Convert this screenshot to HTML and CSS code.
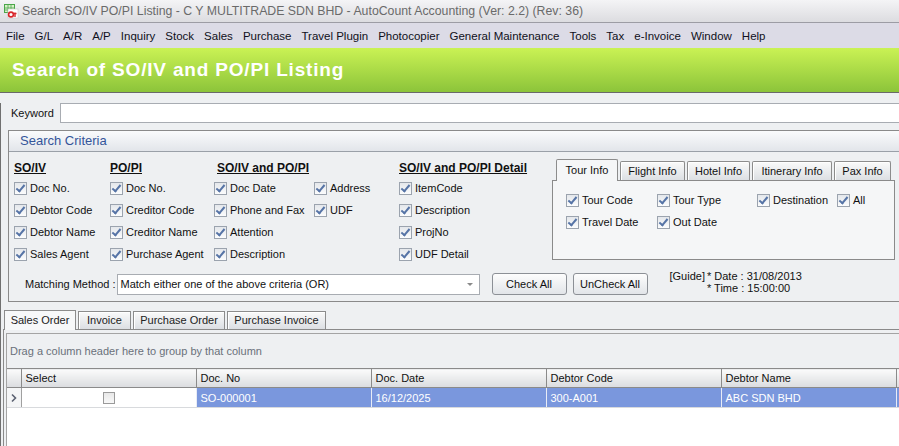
FILE: index.html
```html
<!DOCTYPE html>
<html lang="en">
<head>
    <meta charset="UTF-8">
    <meta name="viewport" content="width=device-width, initial-scale=1.0">
    <title>Search SO/IV PO/PI Listing</title>
    <link rel="stylesheet" href="styles.css">
</head>
<body>
    <header class="titlebar">
        <svg class="app-icon" width="16" height="16" viewBox="0 0 16 16">
            <rect x="1" y="1" width="11" height="9" fill="#4aa64a"/>
            <rect x="2" y="2" width="9" height="7" fill="#d8f0c8"/>
            <path d="M2 5h9M2 7h9M5 2v7M8 2v7" stroke="#4aa64a" stroke-width="0.8"/>
            <rect x="5" y="6" width="10" height="9" fill="#fff" stroke="#c8c8c8" stroke-width="0.6"/>
            <circle cx="8" cy="11.5" r="2.4" fill="none" stroke="#d8262a" stroke-width="1.6"/>
            <path d="M12 9.5v4.5M11 10.5h2.5" stroke="#d8262a" stroke-width="1.4"/>
        </svg>
        <span>Search SO/IV PO/PI Listing - C Y MULTITRADE SDN BHD - AutoCount Accounting (Ver: 2.2) (Rev: 36)</span>
    </header>

    <nav class="menubar">
        <span>File</span><span>G/L</span><span>A/R</span><span>A/P</span><span>Inquiry</span><span>Stock</span>
        <span>Sales</span><span>Purchase</span><span>Travel Plugin</span><span>Photocopier</span>
        <span>General Maintenance</span><span>Tools</span><span>Tax</span><span>e-Invoice</span>
        <span>Window</span><span>Help</span>
    </nav>

    <div class="banner">
        <h1>Search of SO/IV and PO/PI Listing</h1>
    </div>

    <main class="form">
        <div class="keyword-row">
            <label for="keyword">Keyword</label>
            <input type="text" id="keyword">
        </div>

        <section class="criteria">
            <div class="criteria-head">Search Criteria</div>
            <div class="criteria-grid">
                <div class="col-head">SO/IV</div>
                <div class="col-head">PO/PI</div>
                <div class="col-head wide shift">SO/IV and PO/PI</div>
                <div class="col-head">SO/IV and PO/PI Detail</div>

                <div class="check"><span class="cb on"></span>Doc No.</div>
                <div class="check"><span class="cb on"></span>Doc No.</div>
                <div class="check"><span class="cb on"></span>Doc Date</div>
                <div class="check"><span class="cb on"></span>Address</div>
                <div class="check"><span class="cb on"></span>ItemCode</div>

                <div class="check"><span class="cb on"></span>Debtor Code</div>
                <div class="check"><span class="cb on"></span>Creditor Code</div>
                <div class="check"><span class="cb on"></span>Phone and Fax</div>
                <div class="check"><span class="cb on"></span>UDF</div>
                <div class="check"><span class="cb on"></span>Description</div>

                <div class="check"><span class="cb on"></span>Debtor Name</div>
                <div class="check"><span class="cb on"></span>Creditor Name</div>
                <div class="check"><span class="cb on"></span>Attention</div>
                <div></div>
                <div class="check"><span class="cb on"></span>ProjNo</div>

                <div class="check"><span class="cb on"></span>Sales Agent</div>
                <div class="check"><span class="cb on"></span>Purchase Agent</div>
                <div class="check"><span class="cb on"></span>Description</div>
                <div></div>
                <div class="check"><span class="cb on"></span>UDF Detail</div>

                <div class="tabbox">
                    <div class="tabs">
                        <span class="tab active t-tour">Tour Info</span>
                        <span class="tab t-flight">Flight Info</span>
                        <span class="tab t-hotel">Hotel Info</span>
                        <span class="tab t-itin">Itinerary Info</span>
                        <span class="tab t-pax">Pax Info</span>
                    </div>
                    <div class="tab-panel">
                        <div class="check"><span class="cb on"></span>Tour Code</div>
                        <div class="check"><span class="cb on"></span>Tour Type</div>
                        <div class="check"><span class="cb on"></span>Destination</div>
                        <div class="check"><span class="cb on"></span>All</div>
                        <div class="check"><span class="cb on"></span>Travel Date</div>
                        <div class="check"><span class="cb on"></span>Out Date</div>
                    </div>
                </div>
            </div>

            <div class="matching-row">
                <label>Matching Method :</label>
                <div class="combo">
                    <span>Match either one of the above criteria (OR)</span>
                    <span class="arrow"></span>
                </div>
                <button class="btn">Check All</button>
                <button class="btn">UnCheck All</button>
                <div class="guide">
                    <span>[Guide]</span>
                    <div>
                        <div>* Date : 31/08/2013</div>
                        <div>* Time : 15:00:00</div>
                    </div>
                </div>
            </div>
        </section>

        <div class="doc-tabs">
            <span class="dtab active w-so">Sales Order</span>
            <span class="dtab w-iv">Invoice</span>
            <span class="dtab w-po">Purchase Order</span>
            <span class="dtab w-pi">Purchase Invoice</span>
        </div>

        <div class="tab-page">
            <div class="grid">
                <div class="group-panel">Drag a column header here to group by that column</div>
                <table class="results">
                    <thead>
                        <tr>
                            <th class="ind"></th>
                            <th>Select</th>
                            <th>Doc. No</th>
                            <th>Doc. Date</th>
                            <th>Debtor Code</th>
                            <th>Debtor Name</th>
                            <th class="rest"></th>
                        </tr>
                    </thead>
                    <tbody>
                        <tr class="selected">
                            <td class="ind">
                                <svg width="8" height="10" viewBox="0 0 8 10"><path d="M2 1.5L5.5 5L2 8.5" fill="none" stroke="#5a6070" stroke-width="1.6"/></svg>
                            </td>
                            <td class="sel"><span class="cb"></span></td>
                            <td>SO-000001</td>
                            <td>16/12/2025</td>
                            <td>300-A001</td>
                            <td>ABC SDN BHD</td>
                            <td class="rest"></td>
                        </tr>
                    </tbody>
                </table>
            </div>
        </div>
    </main>
</body>
</html>
```

FILE: styles.css
```css
body {
    margin: 0;
    width: 899px;
    height: 446px;
    overflow: hidden;
    background-color: #eef0f2;
    font-family: 'Liberation Sans', Arial, sans-serif;
    font-size: 11px;
    color: #111;
}

.titlebar {
    height: 22px;
    display: flex;
    align-items: center;
    gap: 3px;
    padding-left: 3px;
    background: linear-gradient(#f4f4f6, #dcdce0);
    border-bottom: 1px solid #9c9ca4;
    color: #6a6a6a;
    font-size: 12.3px;
    white-space: nowrap;
}

.menubar {
    height: 25px;
    display: flex;
    align-items: center;
    gap: 10px;
    padding-left: 6px;
    background-color: #dcdbe6;
    font-size: 11.5px;
    color: #101020;
    white-space: nowrap;
}

.banner {
    height: 44px;
    display: flex;
    align-items: center;
    padding-left: 12px;
    background: linear-gradient(#caf254, #8cc43a);
    border-bottom: 1px solid #6a6a6a;
}

.banner h1 {
    margin: 0;
    color: white;
    font-size: 19px;
    letter-spacing: 0.82px;
    font-weight: bold;
}

.form {
    border-left: 1px solid #707070;
    height: 360px;
}

.keyword-row {
    display: flex;
    align-items: center;
    margin-top: 10px;
    padding-left: 10px;
}

.keyword-row label {
    width: 49px;
}

.keyword-row input {
    flex: 1;
    height: 20px;
    box-sizing: border-box;
    border: 1px solid #a8acb2;
    margin-right: -10px;
}

.criteria {
    margin: 7px -20px 0 7px;
    border: 1px solid #8a8a8a;
}

.criteria-head {
    height: 20px;
    line-height: 20px;
    padding-left: 11px;
    background: linear-gradient(#fafbfc, #e2e5ea);
    border-bottom: 1px solid #9aa0a8;
    color: #34559a;
    font-size: 13px;
}

.criteria-grid {
    display: grid;
    grid-template-columns: 96px 104px 100px 85px 153px 343px;
    grid-template-rows: 18px repeat(4, 22px);
    padding: 7px 0 0 5px;
}

.col-head {
    font-weight: bold;
    font-size: 12px;
    text-decoration: underline;
    align-self: center;
}

.col-head.wide {
    grid-column: span 2;
}

.col-head.shift {
    padding-left: 3px;
}

.check {
    display: flex;
    align-items: center;
    gap: 3px;
    white-space: nowrap;
}

.cb {
    width: 13px;
    height: 13px;
    box-sizing: border-box;
    border: 1px solid #9ba3ae;
    background: linear-gradient(#e4e7eb, #fbfcfd);
    position: relative;
    flex: none;
}

.cb.on::after {
    content: '';
    position: absolute;
    left: 3px;
    top: 0px;
    width: 3px;
    height: 7px;
    border: solid #5674a6;
    border-width: 0 2px 2px 0;
    transform: rotate(40deg);
}

.tabbox {
    grid-column: 6;
    grid-row: 1 / span 5;
    align-self: start;
}

.tabs {
    display: flex;
    align-items: flex-end;
    gap: 2px;
    padding-left: 4px;
    height: 21px;
}

.tab {
    height: 18px;
    line-height: 18px;
    text-align: center;
    border: 1px solid #8c8c8c;
    border-bottom: none;
    box-shadow: inset 1px 1px 0 #fff;
    background: linear-gradient(#fafafa, #dcdfe3);
    border-radius: 2px 2px 0 0;
}

.tab.active {
    height: 21px;
    line-height: 21px;
    background: #f5f6f7;
    box-shadow: none;
    position: relative;
    top: 1px;
}

.t-tour { width: 60px; }
.t-flight { width: 63px; }
.t-hotel { width: 61px; }
.t-itin { width: 78px; }
.t-pax { width: 55px; }

.tab-panel {
    height: 80px;
    box-sizing: border-box;
    width: 343px;
    border: 1px solid #8a8a8a;
    background-color: #f5f6f7;
    display: grid;
    grid-template-columns: 91px 100px 80px auto;
    grid-template-rows: 22px 22px;
    padding: 8px 0 0 13px;
}

.matching-row {
    display: flex;
    align-items: center;
    margin-top: 8px;
    padding: 0 0 6px 16px;
    height: 22px;
}

.combo {
    margin-left: 1px;
    width: 363px;
    height: 21px;
    box-sizing: border-box;
    border: 1px solid #a8acb2;
    background-color: white;
    display: flex;
    align-items: center;
    justify-content: space-between;
    padding: 0 6px 0 3px;
}

.arrow {
    width: 0;
    height: 0;
    border-left: 3px solid transparent;
    border-right: 3px solid transparent;
    border-top: 3px solid #8a8a8a;
}

.btn {
    font-family: inherit;
    font-size: 11px;
    color: #111;
    width: 75px;
    height: 22px;
    margin-left: 12px;
    border: 1px solid #8c9096;
    border-radius: 3px;
    background: linear-gradient(#fdfdfd, #e2e5e9);
    padding: 0;
}

.btn + .btn {
    margin-left: 6px;
}

.guide {
    display: flex;
    gap: 2px;
    margin-left: 22px;
    line-height: 12px;
    margin-top: -4px;
}

.doc-tabs {
    display: flex;
    align-items: flex-end;
    gap: 2px;
    margin-top: 8px;
    padding-left: 3px;
    height: 19px;
}

.dtab {
    height: 17px;
    line-height: 17px;
    text-align: center;
    border: 1px solid #8c8c8c;
    border-bottom: none;
    box-shadow: inset 1px 1px 0 #fff;
    background: linear-gradient(#fafafa, #dcdfe3);
    color: #222;
}

.dtab.active {
    height: 19px;
    line-height: 19px;
    background: #f7f8f9;
    box-shadow: none;
    position: relative;
    top: 1px;
}

.w-so { width: 70px; }
.w-iv { width: 51px; }
.w-po { width: 90px; }
.w-pi { width: 97px; }

.tab-page {
    margin-left: 2px;
    border-top: 1px solid #8a8a8a;
    border-left: 1px solid #8a8a8a;
    padding: 3px 0 0 2px;
    height: 200px;
}

.grid {
    border-top: 1px solid #a4a4a4;
    border-left: 1px solid #a4a4a4;
    background-color: white;
    height: 200px;
}

.group-panel {
    height: 34px;
    line-height: 34px;
    padding-left: 3px;
    background-color: #eef0f2;
    color: #6a707a;
}

.results {
    border-collapse: collapse;
    table-layout: fixed;
    width: 1060px;
}

.results th {
    height: 19px;
    box-sizing: border-box;
    width: 175px;
    padding: 0 0 0 4px;
    text-align: left;
    font-weight: normal;
    background: linear-gradient(#fbfbfb, #dadcdf);
    border: 1px solid #8a8a8a;
    border-left: none;
}

.results th.ind,
.results td.ind {
    width: 14px;
    padding: 0;
}

.results td {
    height: 20px;
    box-sizing: border-box;
    padding: 0 0 0 4px;
    border-right: 1px solid #e8ecf6;
    border-bottom: 1px solid #d8dadd;
}

.selected td {
    background-color: #7a97dd;
    color: white;
}

.selected td.ind {
    background: #f4f5f6;
    border-right: 1px solid #a0a0a0;
    text-align: center;
}

.selected td.ind svg {
    display: block;
    margin: 0 auto;
}

.selected td.sel {
    background-color: white;
    text-align: center;
    padding: 0;
}

.sel .cb {
    display: inline-block;
    vertical-align: middle;
    width: 12px;
    height: 12px;
    background: linear-gradient(#e8e8e8, #f8f8f8);
    border-color: #9a9a9a;
}
```
